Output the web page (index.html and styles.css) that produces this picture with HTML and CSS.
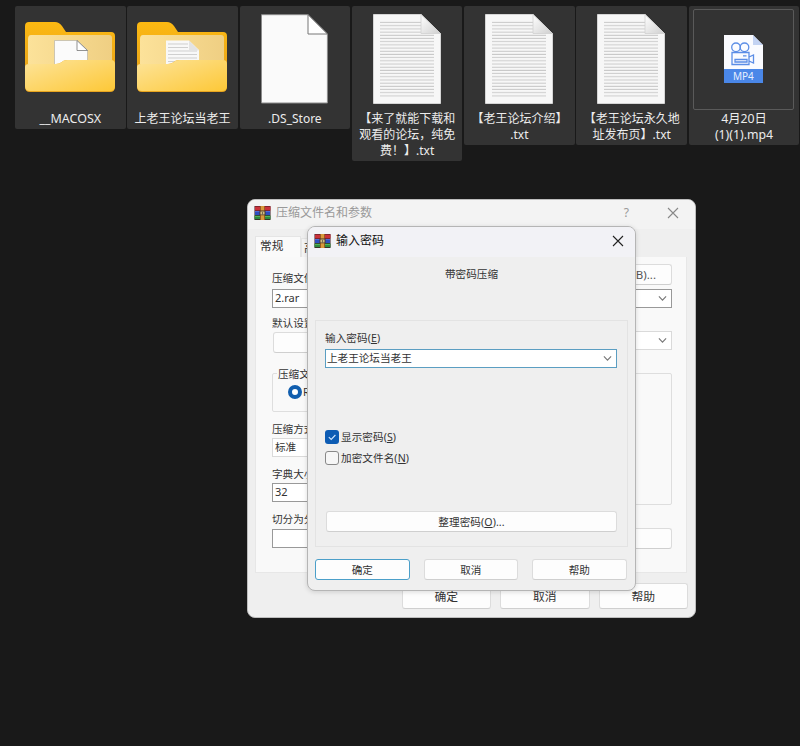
FILE: index.html
```
<!DOCTYPE html>
<html lang="zh-CN">
<head>
<meta charset="utf-8">
<title>压缩文件名和参数</title>
<link rel="stylesheet" href="styles.css">
</head>
<body>
<svg width="0" height="0" class="defs">
  <defs>
    <linearGradient id="front" x1="0" y1="0" x2="1" y2="1"><stop offset="0" stop-color="#fde49a"/><stop offset="1" stop-color="#fdc837"/></linearGradient>
    <linearGradient id="inner" x1="0" y1="0" x2="1" y2="0"><stop offset="0" stop-color="#fce29a"/><stop offset="1" stop-color="#efcf83"/></linearGradient>
    <linearGradient id="back" x1="0" y1="0" x2="0" y2="1"><stop offset="0" stop-color="#fcb912"/><stop offset="1" stop-color="#e6a11c"/></linearGradient>
    <linearGradient id="fold" x1="0" y1="0" x2="1" y2="1"><stop offset="0" stop-color="#fff"/><stop offset="1" stop-color="#cfcfcf"/></linearGradient>
    <pattern id="lines" width="4" height="3.19" patternUnits="userSpaceOnUse" y="18.6"><rect y="2.2" width="4" height="1" fill="#c8c8c8"/></pattern>
    <symbol id="folder-back" viewBox="0 0 90 72">
      <path d="M0 5Q0 1 4 1H30Q34 1 37 5L41 11H86Q90 11 90 15V60H0Z" fill="url(#back)"/>
      <path d="M3 18Q3 14 6 14H84Q87 14 87 17V60H3Z" fill="url(#inner)"/>
    </symbol>
    <symbol id="folder-front" viewBox="0 0 90 72">
      <path d="M0 46Q0 43 4 43H31Q34 43 37 41L38 40Q40 39 43 39H86Q90 39 90 43V66Q90 71 85 71H5Q0 71 0 66Z" fill="#e9a51f"/>
      <path d="M0 46Q0 43 4 43H31Q34 43 37 41L38 40Q40 39 43 39H86Q90 39 90 43V65Q90 70 85 70H5Q0 70 0 65Z" fill="url(#front)"/>
    </symbol>
    <symbol id="text-file" viewBox="0 0 68 90">
      <path d="M.5.5H48L67.500 19.500V89.500H.5Z" fill="#f7f7f7" stroke="#d5d5d5"/>
      <rect x="7" y="7" width="41" height="12.500" fill="url(#lines)"/>
      <rect x="7" y="19" width="54" height="64" fill="url(#lines)"/>
      <path d="M48 .5V19.500H67.500Z" fill="url(#fold)" stroke="#d0d0d0" stroke-width=".8"/>
    </symbol>
    <symbol id="rar" viewBox="0 0 16 14">
      <path fill="#3b1620" d="M0 0H16V14H0Z"/>
      <path fill="#c9323a" d="M.5 .4H16V4.500H.5Z"/>
      <path fill="#2e4fc0" d="M.5 5H15.500V9H.5Z"/>
      <path fill="#2c8a3e" d="M0 9.600H16V13.300H0Z"/>
      <path fill="#6f8cf0" d="M.5 5.400H15.500V6H.5Z"/>
      <path fill="#64c060" d="M.5 10.200H15.500V10.900H.5Z"/>
      <path fill="#9a5a22" d="M5.500 0H10.500V14H5.500Z"/>
      <path fill="#d89a3c" d="M6.500 0H9.500V14H6.500Z"/>
      <path fill="#4a3428" d="M5 4.500H11V9.300H5Z"/>
      <path fill="#e8d28a" d="M6 5.500H10V8.500H6Z"/>
      <path fill="#7b6a50" d="M7.300 6H8.700V9H7.300Z"/>
    </symbol>
    <symbol id="chev" viewBox="0 0 8 6"><path d="M.8 1.200L4 4.500L7.200 1.200" fill="none" stroke="#777" stroke-width="1"/></symbol>
  </defs>
</svg>

<main class="files">
  <figure class="tile">
    <div class="art"><svg class="folder" viewBox="0 0 90 72"><use href="#folder-back"/><path d="M29.500 19.500H52L62.500 29V50H29.500Z" fill="#fbfbfb" stroke="#b9b5a8" stroke-width=".7"/><path d="M52 19.500V29.500H62.500Z" fill="#fff" stroke="#777" stroke-width=".8"/><use href="#folder-front"/></svg></div>
    <figcaption>__MACOSX</figcaption>
  </figure>
  <figure class="tile">
    <div class="art"><svg class="folder" viewBox="0 0 90 72"><use href="#folder-back"/><path d="M29 19.500H52L62 29V50H29Z" fill="#f8f8f8"/><path d="M31 23H51M31 26.500H51M31 30H60M31 33.500H60M31 37H60M31 40.500H60" stroke="#cfcfcf"/><path d="M52 19.500V29.500H62Z" fill="#e3e3e3"/><use href="#folder-front"/></svg></div>
    <figcaption>上老王论坛当老王</figcaption>
  </figure>
  <figure class="tile">
    <div class="art"><svg class="blank" viewBox="0 0 67 90"><path d="M.5.700H47L66.400 20V89H.5Z" fill="#fafafa" stroke="#8b8b8b"/><path d="M47 .7V20H66.400Z" fill="#fff" stroke="#777"/></svg></div>
    <figcaption>.DS_Store</figcaption>
  </figure>
  <figure class="tile">
    <div class="art"><svg class="doc"><use href="#text-file"/></svg></div>
    <figcaption>【来了就能下载和<br>观看的论坛，纯免<br>费！】.txt</figcaption>
  </figure>
  <figure class="tile">
    <div class="art"><svg class="doc"><use href="#text-file"/></svg></div>
    <figcaption>【老王论坛介绍】<br>.txt</figcaption>
  </figure>
  <figure class="tile">
    <div class="art"><svg class="doc"><use href="#text-file"/></svg></div>
    <figcaption>【老王论坛永久地<br>址发布页】.txt</figcaption>
  </figure>
  <figure class="tile">
    <div class="art"><div class="thumb"><svg class="mp4" viewBox="0 0 39 48">
      <path d="M0 0H29L39 10V48H0Z" fill="#fafbff"/><path d="M29 0V10H39Z" fill="#c3d3f3"/><path d="M0 34H39V48H0Z" fill="#4a87e8"/>
      <g fill="none" stroke="#5b8de6" stroke-width="1.300"><circle cx="12" cy="12.300" r="4.300"/><circle cx="20.500" cy="12.300" r="4.300"/><path d="M8 17.500H25V29.500H8ZM25 22L29.500 20V28L25 26M11 24.500H23V27H11ZM19 20.800H22.500"/></g>
      <text x="19.300" y="44.600" text-anchor="middle" class="mp4-text">MP4</text></svg></div></div>
    <figcaption>4月20日<br>(1)(1).mp4</figcaption>
  </figure>
</main>

<section class="window options">
  <header><svg class="rar"><use href="#rar"/></svg><h1>压缩文件名和参数</h1><span class="help">?</span><svg class="close" viewBox="0 0 12 12"><path d="M1 1L11 11M11 1L1 11"/></svg></header>
  <nav><span class="tab active">常规</span><span class="tab">高级</span></nav>
  <div class="panel">
    <div class="row name"><label>压缩文件名(A)</label><button class="browse">浏览(B)...</button></div>
    <div class="field strong"><span>2.rar</span><svg><use href="#chev"/></svg></div>
    <label class="profile-label">默认设置</label>
    <div class="row profile"><button></button><div class="field"><span></span><svg><use href="#chev"/></svg></div></div>
    <div class="columns">
      <div class="left">
        <div class="group"><span class="legend">压缩文件格式</span><div class="radio"><i></i>RAR</div></div>
        <label>压缩方式(C)</label>
        <div class="field"><span>标准</span></div>
        <label>字典大小(I)</label>
        <div class="field strong"><span>32</span></div>
        <label>切分为分卷(V)</label>
      </div>
      <div class="group tall"></div>
    </div>
    <div class="row volume"><div class="field strong"></div><button></button></div>
  </div>
  <footer><button>确定</button><button>取消</button><button>帮助</button></footer>
</section>

<section class="window password">
  <header><svg class="rar"><use href="#rar"/></svg><h2>输入密码</h2><svg class="close" viewBox="0 0 12 12"><path d="M1 1L11 11M11 1L1 11"/></svg></header>
  <p class="lead">带密码压缩</p>
  <div class="box">
    <label>输入密码(<u>E</u>)</label>
    <div class="field focus"><span>上老王论坛当老王</span><svg><use href="#chev"/></svg></div>
    <div class="check first"><i class="on"><svg viewBox="0 0 14 14"><path d="M3.800 7.200L6.200 9.500L10.400 5"/></svg></i>显示密码(<u>S</u>)</div>
    <div class="check"><i></i>加密文件名(<u>N</u>)</div>
    <button>整理密码(<u>O</u>)...</button>
  </div>
  <footer><button class="default">确定</button><button>取消</button><button>帮助</button></footer>
</section>
</body>
</html>
```
FILE: styles.css
```
* { box-sizing: border-box; }
body {
  margin: 0; width: 800px; height: 746px; overflow: hidden; position: relative;
  background: #191919; color: #333;
  font: 10.6px/16px "Noto Sans", "Noto Sans CJK SC", sans-serif;
}
.defs { position: absolute; }
svg { display: block; flex: none; }
button { font: inherit; color: inherit; padding: 0; border: 1px solid #dcdcdc; border-bottom-color: #cfcfcf; border-radius: 3px; background: #fdfdfd; }
h1, h2, p, figure { margin: 0; font-weight: 400; }
u { text-underline-offset: 1px; }

.files { display: grid; grid-template-columns: repeat(7, 110.600px); gap: 1.700px; align-items: start; padding: 6px 0 0 15px; }
.tile { background: #333; border-radius: 2px; padding-bottom: 2px; color: #ececec; text-align: center; }
.art { height: 105px; display: flex; justify-content: center; }
figcaption { font-size: 12px; line-height: 16px; white-space: nowrap; }
.tile:nth-child(1) figcaption { font-size: 12.500px; }
.tile:nth-child(7) figcaption { font-size: 12.300px; }
.folder { width: 90px; height: 72px; margin-top: 15px; margin-left: -1px; }
.blank { width: 67px; height: 90px; margin-top: 8px; margin-left: -1px; }
.doc { width: 68px; height: 90px; margin-top: 8px; margin-left: -1px; }
.thumb { width: 101px; height: 101px; margin: 3px 0 0 -1px; padding: 0 0 2px; border: 1px solid #5a5a5a; border-radius: 2px; display: flex; align-items: center; justify-content: center; }
.mp4 { width: 39px; height: 48px; }
.mp4-text { font-size: 10px; fill: #e6efff; }

.window { position: absolute; border-radius: 8px; background: #efefef; overflow: hidden; }
.window header { display: flex; align-items: center; }
.window h1, .window h2 { font-size: 12px; line-height: 16px; flex: 1; }
.rar { width: 17px; height: 14px; margin-right: 5px; }
.close { width: 12px; height: 12px; fill: none; stroke: #222; stroke-width: 1.100; }
.window footer { display: flex; }

.field { display: flex; align-items: center; justify-content: space-between; height: 19px; padding: 0 4px 0 2px; background: #fff; border: 1px solid #dadada; line-height: 16px; }
.field span { margin-top: -1px; }
.field svg { width: 9px; height: 7px; }
.strong { border-color: #999; }
.focus { border-color: #5b9ec2; padding-left: 1px; }
.strong span { font-size: 11px; }
label { display: block; white-space: nowrap; }

.options { left: 247px; top: 199px; width: 449px; height: 419px; border: 1px solid #bdbdbd; }
.options header { height: 29px; padding: 0 16px 3px 6px; background: #f3f3f3; }
.options h1 { color: #999; }
.help { font-size: 12px; color: #999; margin-right: 38px; }
.options .close { stroke: #888; }
.options nav { display: flex; align-items: flex-end; height: 28px; padding-left: 7px; font-size: 11.700px; }
.tab { height: 19px; padding: 0 2px; line-height: 17px; background: #f4f4f4; border: 1px solid #e5e5e5; border-bottom: 0; }
.tab.active { width: 46px; height: 21px; padding-left: 4px; line-height: 17px; background: #fafafa; }
.panel { width: 432px; height: 316px; margin-left: 7px; padding: 7px 14px 0 16px; background: #f9f9f9; border: 1px solid #e7e7e7; border-top: 0; }
.row { display: flex; justify-content: space-between; }
.name { height: 21px; margin-bottom: 4px; }
.name label { padding-top: 6px; }
.browse { width: 86px; height: 21px; padding-right: 15px; text-align: right; font-size: 11.500px; color: #555; }
.profile-label { margin: 7px 0 0; }
.profile { height: 21px; }
.profile button { width: 120px; height: 21px; margin: 1px 0 0 1px; }
.profile .field { width: 230px; }
.columns { display: flex; justify-content: space-between; margin-top: 21px; }
.left { width: 180px; }
.group { height: 39px; border: 1px solid #dedede; border-radius: 2px; }
.tall { width: 200px; height: 132px; }
.legend { display: block; width: max-content; margin: -8px 0 0 4px; padding: 0 1px; background: #f9f9f9; }
.radio { display: flex; align-items: center; gap: 1px; margin: 2px 0 0 15px; }
.radio i { width: 14px; height: 14px; border: 4.500px solid #115eae; border-radius: 50%; background: #fff; }
.left label { margin-top: 9px; }
.left .field { margin-top: 1px; }
.left .field + label { margin-top: 9px; }
.left label + .field.strong { margin-top: 1px; }
.volume { margin-top: 1px; }
.volume .field { width: 110px; margin-top: 1px; }
.volume button { width: 80px; height: 21px; }
.options footer { justify-content: flex-end; gap: 9px; padding: 10px 7px 0 0; font-size: 11.800px; }
.options footer button { width: 89.500px; height: 26px; }

.password { left: 307px; top: 226px; width: 329px; height: 365px; border: 1px solid #b5b5b5; box-shadow: 0 1px 5px rgba(0, 0, 0, .14); }
.password header { height: 30px; padding: 0 11px 2px 6px; background: #f2f2f6; }
.password h2 { color: #111; }
.lead { margin-top: 9px; text-align: center; }
.box { width: 313px; height: 227px; margin: 38px 0 0 7px; padding: 9px 9px 0; border: 1px solid #e3e3e3; }
.box label, .check, .box button { letter-spacing: .08px; }
.box .field { width: 292px; margin-top: 3px; }
.check { display: flex; align-items: center; height: 16px; margin-top: 5px; }
.check.first { margin-top: 61px; }
.check i { width: 14px; height: 14px; margin-right: 2px; border: 1px solid #888; border-radius: 3px; background: #f6f6f6; font-style: normal; }
.check i.on { border: 0; background: #0d5cb4; }
.check path { fill: none; stroke: #cfe6ff; stroke-width: 1.100; }
.box button { display: block; width: 291px; height: 21px; margin: 45px 0 0 1px; line-height: 18px; }
.password footer { gap: 14px; padding: 12px 0 0 7px; }
.password footer button { width: 94.500px; height: 21px; line-height: 18px; }
.password footer .default { border-color: #4b9fc9; }
```
